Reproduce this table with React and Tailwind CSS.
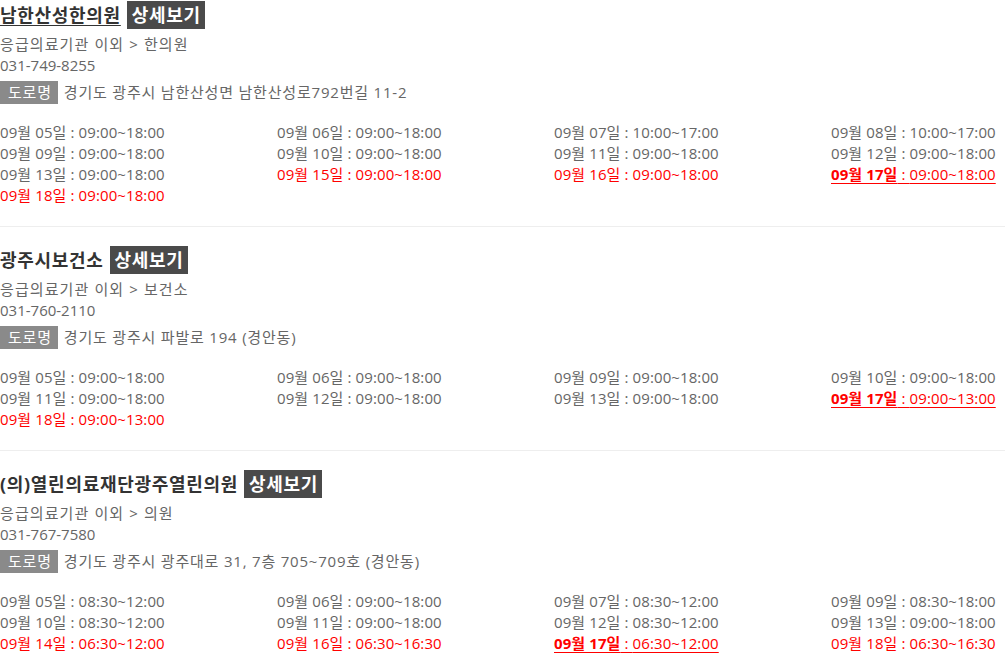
import React from "react";

// Clinic list data
const clinics = [
  {
    name: "남한산성한의원",
    hover: true,
    category: "한의원",
    phone: "031-749-8255",
    address: "경기도 광주시 남한산성면 남한산성로792번길 11-2",
    days: [
      ["09월 05일", "09:00~18:00"],
      ["09월 06일", "09:00~18:00"],
      ["09월 07일", "10:00~17:00"],
      ["09월 08일", "10:00~17:00"],
      ["09월 09일", "09:00~18:00"],
      ["09월 10일", "09:00~18:00"],
      ["09월 11일", "09:00~18:00"],
      ["09월 12일", "09:00~18:00"],
      ["09월 13일", "09:00~18:00"],
      ["09월 15일", "09:00~18:00", "holiday"],
      ["09월 16일", "09:00~18:00", "holiday"],
      ["09월 17일", "09:00~18:00", "today"],
      ["09월 18일", "09:00~18:00", "holiday"],
    ],
  },
  {
    name: "광주시보건소",
    category: "보건소",
    phone: "031-760-2110",
    address: "경기도 광주시 파발로 194 (경안동)",
    days: [
      ["09월 05일", "09:00~18:00"],
      ["09월 06일", "09:00~18:00"],
      ["09월 09일", "09:00~18:00"],
      ["09월 10일", "09:00~18:00"],
      ["09월 11일", "09:00~18:00"],
      ["09월 12일", "09:00~18:00"],
      ["09월 13일", "09:00~18:00"],
      ["09월 17일", "09:00~13:00", "today"],
      ["09월 18일", "09:00~13:00", "holiday"],
    ],
  },
  {
    name: "(의)열린의료재단광주열린의원",
    category: "의원",
    phone: "031-767-7580",
    address: "경기도 광주시 광주대로 31, 7층 705~709호 (경안동)",
    days: [
      ["09월 05일", "08:30~12:00"],
      ["09월 06일", "09:00~18:00"],
      ["09월 07일", "08:30~12:00"],
      ["09월 09일", "08:30~18:00"],
      ["09월 10일", "08:30~12:00"],
      ["09월 11일", "09:00~18:00"],
      ["09월 12일", "08:30~12:00"],
      ["09월 13일", "09:00~18:00"],
      ["09월 14일", "06:30~12:00", "holiday"],
      ["09월 16일", "06:30~16:30", "holiday"],
      ["09월 17일", "06:30~12:00", "today"],
      ["09월 18일", "06:30~16:30", "holiday"],
    ],
  },
];

function DayItem({ date, time, kind }) {
  if (kind === "today") {
    return (
      <li className="whitespace-nowrap text-[#ff0000] underline underline-offset-[3px] tracking-[0.1px]">
        <b>{date}</b> : {time}
      </li>
    );
  }
  return (
    <li className={`whitespace-nowrap tracking-[0.1px] ${kind === "holiday" ? "text-[#ff0000]" : ""}`}>
      {date} : {time}
    </li>
  );
}

function Clinic({ clinic, first }) {
  return (
    <div className={`pb-[20px] ${first ? "" : "pt-[18px] border-t border-[#eeeeee]"}`}>
      {/* Title */}
      <div className="flex items-center h-[30px]">
        <span
          className={`text-[18px] font-bold text-[#333333] tracking-[0.7px] ${clinic.hover ? "underline underline-offset-[3px]" : ""}`}
        >
          {clinic.name}
        </span>
        <span className="ml-[6px] bg-[#4a4a4a] text-white text-[18px] font-bold tracking-[0.7px] h-[28px] leading-[28px] pl-[5px] pr-[4px]">
          상세보기
        </span>
      </div>

      <p className="mt-[4px] tracking-[1.1px]">응급의료기관 이외 &gt; {clinic.category}</p>
      <p>{clinic.phone}</p>

      {/* Address */}
      <div className="flex items-center mt-[4px] h-[24px]">
        <span className="bg-[#8a8a8a] text-white h-[23px] leading-[23px] pl-[8px] pr-[6px] tracking-[0.8px]">
          도로명
        </span>
        <span className="ml-[6px] tracking-[0.8px]">{clinic.address}</span>
      </div>

      {/* Schedule */}
      <ul className="mt-[18px] grid grid-cols-[277px_277px_277px_1fr]">
        {clinic.days.map(([d, t, k]) => (
          <DayItem key={d} date={d} time={t} kind={k} />
        ))}
      </ul>
    </div>
  );
}

export default function App() {
  return (
    <div
      className="w-[1005px] h-[670px] overflow-hidden bg-white text-[15px] leading-[21px] text-[#666666]"
      style={{ fontFamily: '"Open Sans", "Noto Sans CJK KR", sans-serif' }}
    >
      {clinics.map((c, i) => (
        <Clinic key={c.name} clinic={c} first={i === 0} />
      ))}
    </div>
  );
}
